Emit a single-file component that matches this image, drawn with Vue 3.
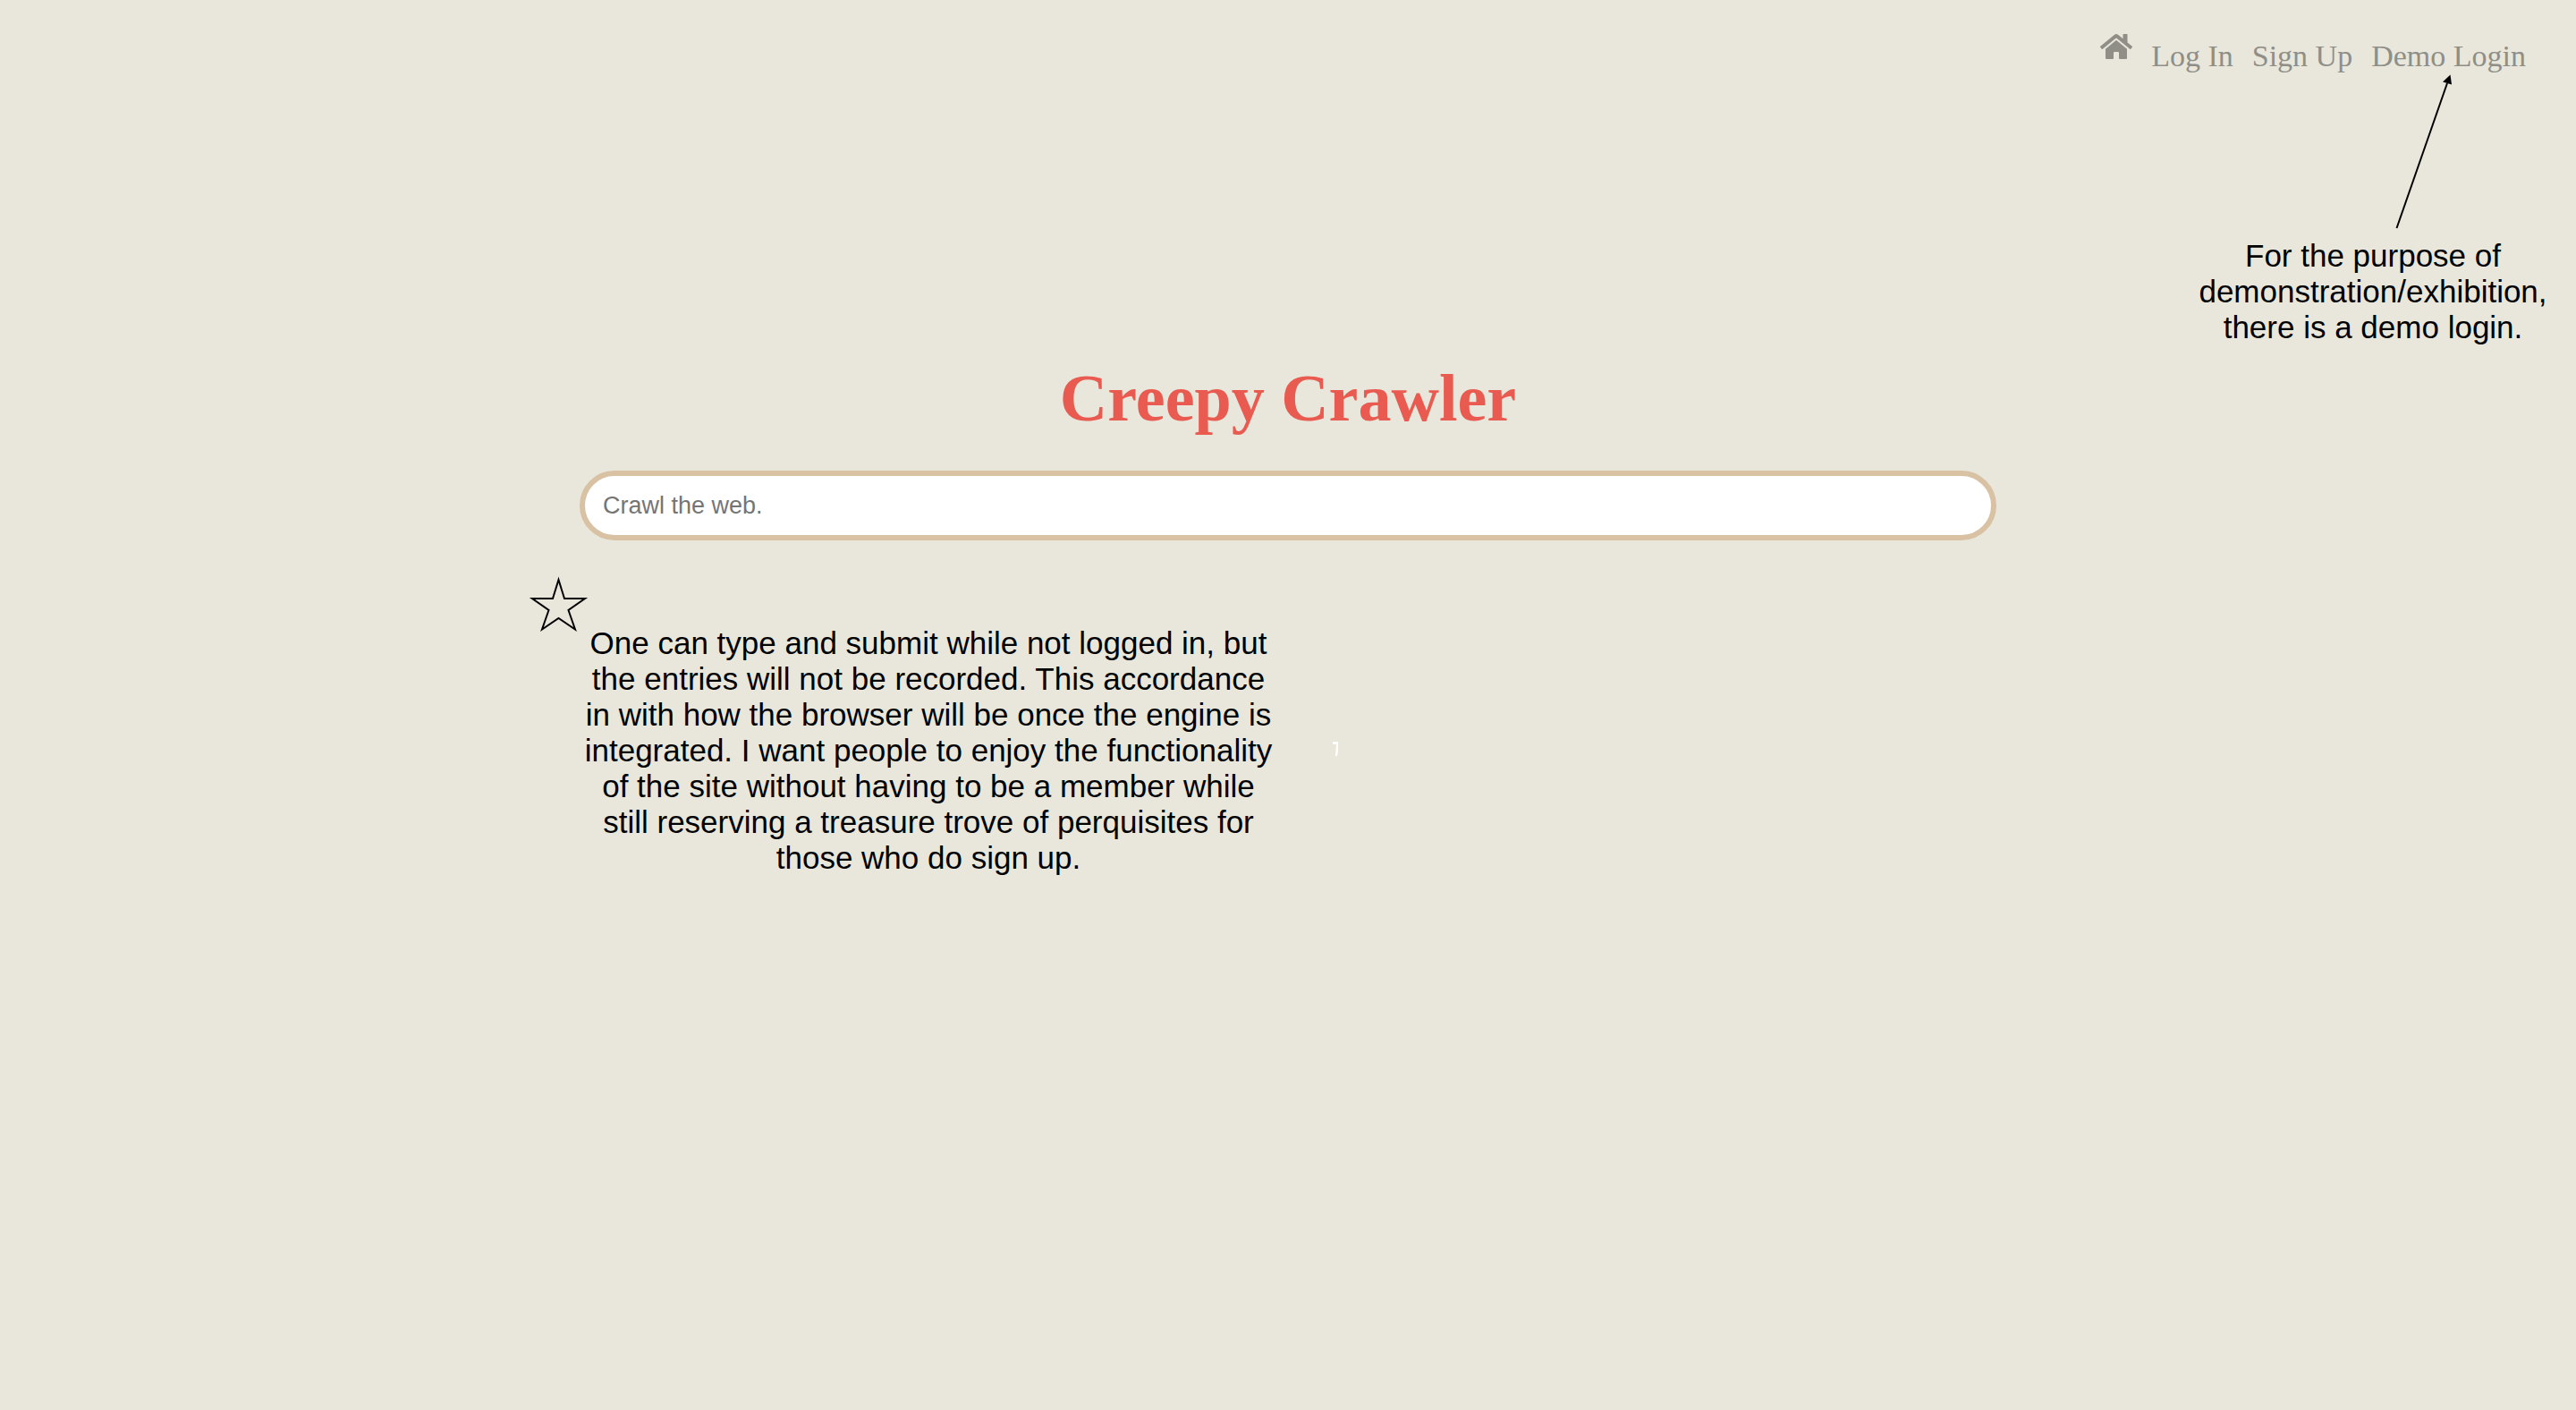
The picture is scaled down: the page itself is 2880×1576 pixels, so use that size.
<script setup>
import { ref } from 'vue'

const query = ref('')
const links = [
  { label: 'Log In', href: '#login' },
  { label: 'Sign Up', href: '#signup' },
  { label: 'Demo Login', href: '#demo' },
]
</script>

<template>
  <div class="page">
    <header class="header">
      <nav class="nav" aria-label="Main">
        <a class="home" href="#home" aria-label="Home">
          <svg viewBox="0 0 576 512" width="36" height="32" fill="currentColor" aria-hidden="true">
            <path d="M280.37 148.26L96 300.11V464a16 16 0 0 0 16 16l112.06-.29a16 16 0 0 0 15.92-16V368a16 16 0 0 1 16-16h64a16 16 0 0 1 16 16v95.64a16 16 0 0 0 16 16.05L464 480a16 16 0 0 0 16-16V300L295.67 148.26a12.19 12.19 0 0 0-15.3 0zM571.6 251.47L488 182.56V44.05a12 12 0 0 0-12-12h-56a12 12 0 0 0-12 12v72.61L318.47 43a48 48 0 0 0-61 0L4.34 251.47a12 12 0 0 0-1.6 16.9l25.5 31A12 12 0 0 0 45.15 301l235.22-193.74a12.19 12.19 0 0 1 15.3 0L530.9 301a12 12 0 0 0 16.9-1.6l25.5-31a12 12 0 0 0-1.7-16.93z" />
          </svg>
        </a>
        <a v-for="link in links" :key="link.label" class="link" :href="link.href">{{ link.label }}</a>
      </nav>
      <aside class="demo-note">
        <svg class="arrow" viewBox="0 0 400 186" width="400" height="186" aria-hidden="true">
          <path d="M226.5 175L283 13" fill="none" stroke="#000" stroke-width="2" />
          <path d="M286.5 3.5L278 11.5L288 14.5Z" fill="#000" />
        </svg>
        <p class="note">For the purpose of demonstration/exhibition, there is a demo login.</p>
      </aside>
    </header>

    <main class="main">
      <h1 class="title">Creepy Crawler</h1>
      <form class="search" role="search" @submit.prevent>
        <input v-model="query" class="field" type="text" name="query" placeholder="Crawl the web." aria-label="Crawl the web" />
      </form>
      <section class="search-note">
        <svg class="star" viewBox="0 0 60 68" width="60" height="68" aria-hidden="true">
          <path d="M34.5 6L41 27L64 27L45.5 40L53 61.5L34.5 49L16 61.5L23.5 40L5 27L28 27Z" fill="none" stroke="#000" stroke-width="2" />
        </svg>
        <p class="note">
          One can type and submit while not logged in, but the entries will not be recorded. This accordance in with how
          the browser will be once the engine is integrated. I want people to enjoy the functionality of the site without
          having to be a member while still reserving a treasure trove of perquisites for those who do sign up.
        </p>
        <svg class="tick" viewBox="0 0 6 16" width="6" height="16" aria-hidden="true">
          <path d="M0 0H6V10L5 16H3L4 3H0Z" fill="#fff" />
        </svg>
      </section>
    </main>
  </div>
</template>

<style>
body {
  margin: 0;
  background: #e9e7db;
}
</style>

<style scoped>
.page {
  min-height: 100vh;
  box-sizing: border-box;
  font-family: "Liberation Sans", Arial, sans-serif;
  color: #000;
}

.header {
  display: flex;
  flex-direction: column;
  align-items: flex-end;
  padding-top: 36px;
}

.nav {
  display: flex;
  align-items: flex-start;
  gap: 21px;
  padding-right: 56px;
  font-family: "Liberation Serif", "Times New Roman", serif;
  font-size: 34px;
  line-height: 54px;
}

.home,
.link {
  color: #8f8e87;
  text-decoration: none;
}

.home svg {
  display: block;
}

.demo-note {
  width: 400px;
  margin: -10px 27px 0 0;
}

.arrow {
  display: block;
}

.note {
  margin: 0;
  font-size: 35px;
  line-height: 40px;
  text-align: center;
}

.main {
  width: 55%;
  margin: 16px auto 0;
}

.title {
  margin: 0;
  font-family: "Liberation Serif", "Times New Roman", serif;
  font-size: 74px;
  line-height: 86px;
  text-align: center;
  color: #e95b50;
}

.search {
  margin-top: 38px;
}

.field {
  display: block;
  box-sizing: border-box;
  width: 100%;
  height: 78px;
  padding: 0 20px;
  border: 6px solid #d8c2a3;
  border-radius: 40px;
  background: #fff;
  font-family: inherit;
  font-size: 27px;
  color: #000;
  outline: none;
}

.field::placeholder {
  color: #757575;
  opacity: 1;
}

.search-note {
  position: relative;
  display: flex;
  align-items: flex-start;
  margin: 38px 0 0 -58px;
}

.star {
  flex: none;
  overflow: visible;
}

.search-note .note {
  width: 776px;
  margin-top: 57px;
}

.tick {
  position: absolute;
  top: 187px;
  left: 900px;
}
</style>
